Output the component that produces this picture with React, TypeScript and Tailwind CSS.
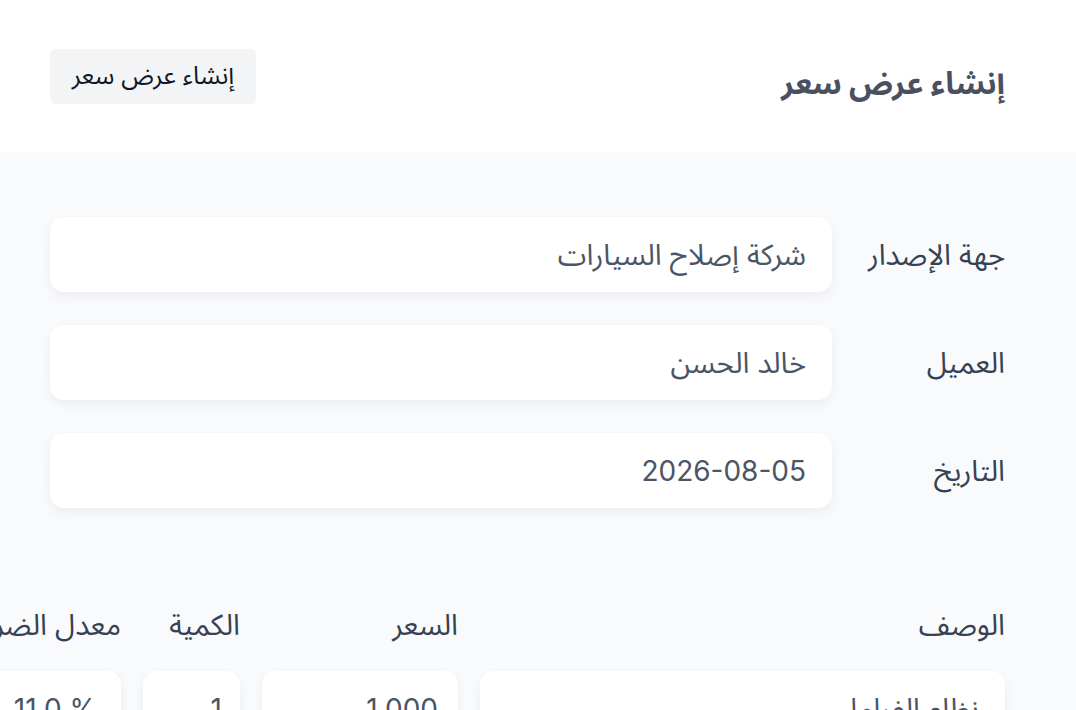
const fields = [
  ["جهة الإصدار", "شركة إصلاح السيارات"],
  ["العميل", "خالد الحسن"],
  ["التاريخ", "2026-08-05"],
];

const cell =
  "flex h-[75px] shrink-0 items-center rounded-[14px] bg-white shadow-[0_4px_12px_rgba(15,23,42,0.06)]";

export default function App() {
  return (
    <div
      dir="rtl"
      className="h-[710px] w-[1076px] overflow-hidden bg-white text-gray-600"
      style={{ fontFamily: "Inter, 'Noto Sans', 'Noto Sans Arabic', 'DejaVu Sans', sans-serif" }}
    >
      <header className="flex h-[152px] items-center justify-between pl-[50px] pr-[71px]">
        <h1 className="mt-[14px] text-[31px] font-bold text-[#4b5060]">إنشاء عرض سعر</h1>
        <button className="h-[55px] w-[206px] rounded-md bg-gray-100 text-[25px] text-gray-900">
          إنشاء عرض سعر
        </button>
      </header>

      <main className="h-[600px] rounded-b-[40px] bg-[#f8fafc] pr-[71px]">
        <div className="flex flex-col gap-[33px] pt-[65px]">
          {fields.map(([label, value]) => (
            <div key={label} className="flex items-center">
              <label className="w-[173px] shrink-0 text-[29px] text-gray-700">{label}</label>
              <div className={`${cell} w-[782px] px-[26px] text-[29px] text-gray-600`}>
                <span className={label === "التاريخ" ? "text-[28px]" : ""}>{value}</span>
              </div>
            </div>
          ))}
        </div>

        <div className="mt-[99px] ml-[-120px]">
          <div className="flex items-center gap-[22px] text-[29px] leading-[36px] text-gray-700">
            <div className="w-[525px] shrink-0">الوصف</div>
            <div className="w-[196px] shrink-0">السعر</div>
            <div className="w-[97px] shrink-0">الكمية</div>
            <div className="w-[242px] shrink-0 whitespace-nowrap">معدل الضريبة</div>
          </div>
          <div className="mt-[28px] flex gap-[22px] text-[28px] text-gray-600">
            <div className={`${cell} w-[525px] px-[26px] text-[29px]`}>نظام الفرامل</div>
            <div className={`${cell} w-[196px] px-[20px]`}>1,000</div>
            <div className={`${cell} w-[97px] px-[18px]`}>1</div>
            <div className={`${cell} w-[242px] px-[24px]`}>
              <span dir="ltr">11.0 %</span>
            </div>
          </div>
        </div>
      </main>
    </div>
  );
}
